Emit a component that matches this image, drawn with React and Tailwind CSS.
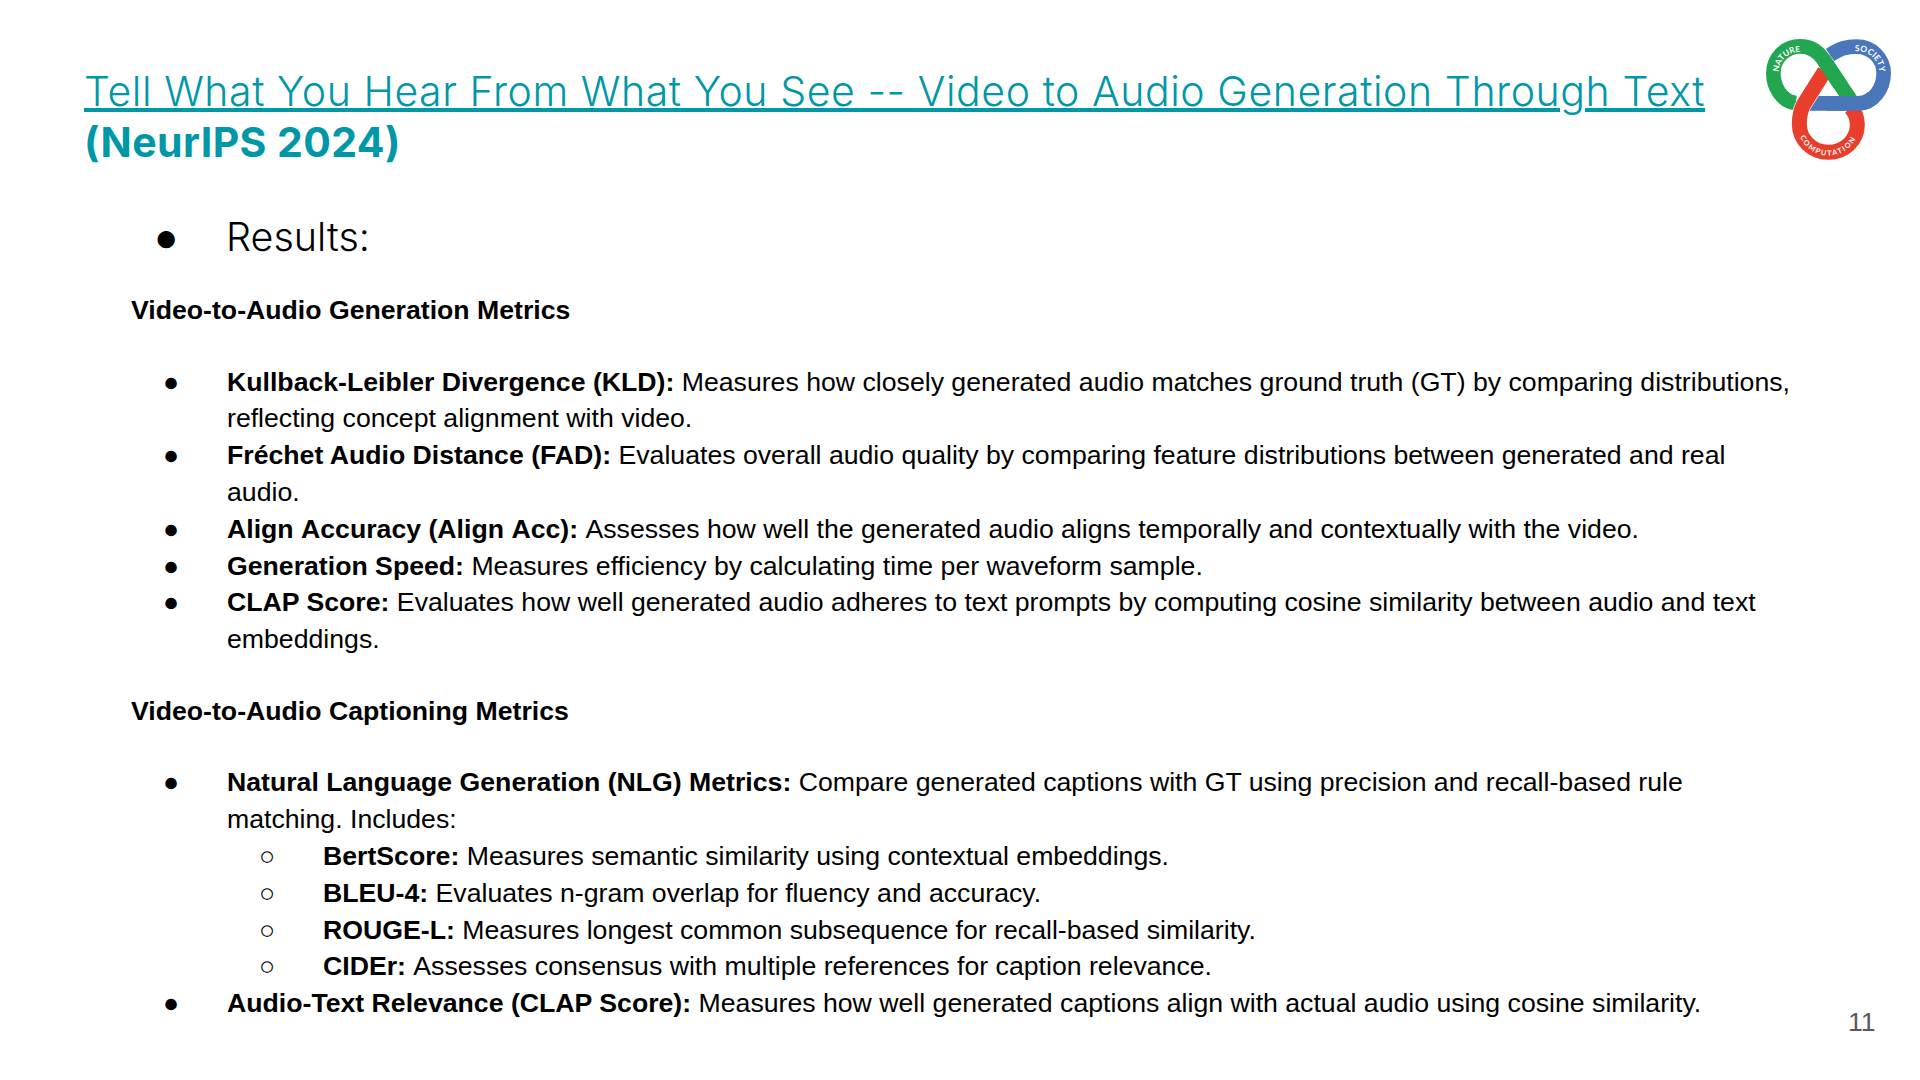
const Li = ({ b, children, sub, nokern }) => (
  <div className={(sub ? "flex pl-[107px]" : "flex pl-[11px]") + (nokern ? " [font-kerning:none]" : "")}>
    <span className="w-[112px] shrink-0 text-center">{sub ? "○" : "●"}</span>
    <p className={sub ? "w-[1472px]" : "w-[1568px]"}><b className="font-bold">{b}</b> {children}</p>
  </div>
);

const Logo = () => (
  <svg className="absolute left-[1740px] top-[20px]" width="180" height="150" viewBox="0 0 540 450" fill="none">
    <defs>
      <path id="nat" d="M 116 156 A 62 62 0 0 1 182 96" />
      <path id="soc" d="M 345 94 A 66 66 0 0 1 419 160" />
      <path id="com" d="M 180 350 A 92 92 0 0 0 350 350" />
    </defs>
    <path d="M 205 250 L 355 250 C 400 250 431 205 431 160 C 431 115 395 80 350 80 C 320 80 300 85 270 105" stroke="#4a76bc" strokeWidth="44" />
    <path d="M 168 249 C 125 245 100 200 100 160 C 100 115 135 79 180 79 C 215 79 235 95 250 118 L 335 245" stroke="#22a64f" strokeWidth="44" />
    <path d="M 254 154 L 190 255 C 178 280 178 300 178 312 C 178 358 215 397 265 397 C 315 397 352 358 352 315 C 352 295 345 275 330 262" stroke="#ffffff" strokeWidth="49" />
    <path d="M 254 154 L 190 255 C 178 280 178 300 178 312 C 178 358 215 397 265 397 C 315 397 352 358 352 315 C 352 295 345 275 330 262" stroke="#e83e2b" strokeWidth="45" />
    <path d="M 250 118 L 300 193" stroke="#22a64f" strokeWidth="44" />
    <path d="M 260 250 L 355 250 C 375 250 390 242 400 230" stroke="#4a76bc" strokeWidth="44" />
    <g fill="#ffffff" fontFamily="'Lato', sans-serif" fontWeight="700" fontSize="25">
      <text><textPath href="#nat" textLength="98">NATURE</textPath></text>
      <text><textPath href="#soc" textLength="108">SOCIETY</textPath></text>
      <text fontSize="22"><textPath href="#com" textLength="208">COMPUTATION</textPath></text>
    </g>
  </svg>
);

export default function App() {
  return (
    <div className="relative w-[1920px] h-[1080px] overflow-hidden bg-white text-black font-['Liberation_Sans',sans-serif] text-[26.67px] leading-[36.8px]">
      <Logo />
      <h1 className="pl-[84px] pt-[66px] font-['Inter',sans-serif] text-[41px] leading-[51px] text-[#0097a7]">
        <span className="font-[350] tracking-[0.57px] underline decoration-[4px] underline-offset-[2px]">Tell What You Hear From What You See -- Video to Audio Generation Through Text</span>
        <br />
        <span className="font-bold tracking-[0.4px]">(NeurIPS 2024)</span>
      </h1>
      <div className="flex items-center pl-[154px] pt-[39px] font-['Inter',sans-serif] text-[39.5px] leading-[60px] font-light">
        <span className="w-[72px] font-['Liberation_Sans',sans-serif] text-[40px]">●</span>
        <span>Results:</span>
      </div>
      <div className="pl-[104px] pt-[25px]">
        <p className="pl-[27px] font-bold">Video-to-Audio Generation Metrics</p>
        <div className="h-[34.8px]" />
        <Li b="Kullback-Leibler Divergence (KLD):">Measures how closely generated audio matches ground truth (GT) by comparing distributions, reflecting concept alignment with video.</Li>
        <Li b="Fréchet Audio Distance (FAD):">Evaluates overall audio quality by comparing feature distributions between generated and real audio.</Li>
        <Li nokern b="Align Accuracy (Align Acc):">Assesses how well the generated audio aligns temporally and contextually with the video.</Li>
        <Li b="Generation Speed:">Measures efficiency by calculating time per waveform sample.</Li>
        <Li b="CLAP Score:">Evaluates how well generated audio adheres to text prompts by computing cosine similarity between audio and text embeddings.</Li>
        <div className="h-[34.8px]" />
        <p className="pl-[27px] font-bold">Video-to-Audio Captioning Metrics</p>
        <div className="h-[34.8px]" />
        <Li b="Natural Language Generation (NLG) Metrics:">Compare generated captions with GT using precision and recall-based rule matching. Includes:</Li>
        <Li sub b="BertScore:">Measures semantic similarity using contextual embeddings.</Li>
        <Li sub b="BLEU-4:">Evaluates n-gram overlap for fluency and accuracy.</Li>
        <Li sub b="ROUGE-L:">Measures longest common subsequence for recall-based similarity.</Li>
        <Li sub nokern b="CIDEr:">Assesses consensus with multiple references for caption relevance.</Li>
        <Li b="Audio-Text Relevance (CLAP Score):">Measures how well generated captions align with actual audio using cosine similarity.</Li>
      </div>
      <span className="absolute left-[1848px] top-[1004px] text-[26.67px] leading-[36px] text-[#595959]">11</span>
    </div>
  );
}
